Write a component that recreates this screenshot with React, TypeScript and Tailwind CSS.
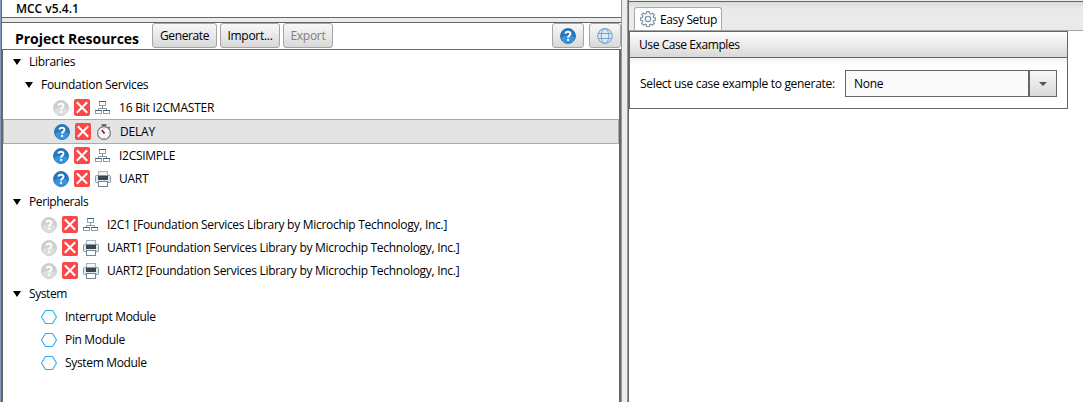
import type { ReactNode } from 'react';

function HelpIcon({ muted = false }: { muted?: boolean }) {
  const rim = muted ? '#c4c4c4' : '#1b66a8';
  const top = muted ? '#cfcfcf' : '#2378c0';
  const low = muted ? '#dedede' : '#3a95dd';
  return (
    <svg width="16" height="16" viewBox="0 0 16 16" className="shrink-0">
      <circle cx="8" cy="8" r="7.5" fill={top} stroke={rim} strokeWidth="0.8" />
      <path d="M1 9.5Q8 5.5 15 9.5A7.2 7.2 0 0 1 1 9.5Z" fill={low} />
      <path d="M5.4 5.7Q5.6 3.7 8 3.7T10.5 5.7Q10.5 6.8 9.2 7.6Q8.1 8.3 8.1 9.7" fill="none" stroke="#fff" strokeWidth="1.9" />
      <circle cx="8.1" cy="12" r="1.15" fill="#fff" />
    </svg>
  );
}

function RemoveIcon() {
  return (
    <svg width="16" height="17" viewBox="0 0 16 17" className="shrink-0">
      <rect width="16" height="17" rx="2" fill="#fb4747" />
      <path d="M2.8 3.2L13.2 13.8M13.2 3.2L2.8 13.8" stroke="#fff" strokeWidth="2" />
    </svg>
  );
}

function NetworkIcon() {
  return (
    <svg width="16" height="16" viewBox="0 0 16 16" className="shrink-0">
      <path d="M7.5 6V8.5M3.5 10V8.5H11.5V10" fill="none" stroke="#8c979f" />
      <g fill="#fff" stroke="#8fa3b1">
        <rect x="4.5" y="1.5" width="6" height="4" />
        <rect x="0.5" y="10.5" width="6" height="3" />
        <rect x="8.5" y="10.5" width="6" height="3" />
      </g>
      <path d="M4 1.5H11M0 10.5H7M8 10.5H15" stroke="#43667f" />
    </svg>
  );
}

function TimerIcon() {
  return (
    <svg width="16" height="16" viewBox="0 0 16 16" className="shrink-0">
      <path d="M5.5 .9H10.5M8 .8V3M12.4 3L13.8 4.2" stroke="#555" strokeWidth="1.5" />
      <circle cx="8" cy="9" r="6.4" fill="#fafafa" stroke="#707070" strokeWidth="1.1" />
      <path d="M8 4V5M8 13V14M3 9H4M12 9H13" stroke="#bbb" />
      <path d="M5.8 6L8.6 9.6" stroke="#a82436" strokeWidth="1.8" />
    </svg>
  );
}

function PrinterIcon() {
  return (
    <svg width="16" height="16" viewBox="0 0 16 16" className="shrink-0">
      <rect x="3.5" y=".5" width="9" height="4" fill="#f4f6f8" stroke="#a5b4c0" />
      <rect x=".5" y="4.5" width="15" height="7" rx="1" fill="#e3e7eb" stroke="#8796a3" />
      <rect x="3" y="5" width="10" height="4" fill="#3b4653" />
      <rect x="3.5" y="10.5" width="9" height="5" fill="#fff" stroke="#6f8698" />
    </svg>
  );
}

function HexIcon() {
  return (
    <svg width="16" height="16" viewBox="0 0 16 16" className="shrink-0">
      <path d="M4.5 1.5H11.5L15.5 8L11.5 14.5H4.5L.5 8Z" fill="none" stroke="#2bb0f0" strokeWidth="1.1" />
    </svg>
  );
}

function GlobeIcon() {
  return (
    <svg width="16" height="16" viewBox="0 0 16 16">
      <circle cx="8" cy="8" r="7.3" fill="#dcebf9" stroke="#8eaac8" strokeWidth="1.2" />
      <g fill="none" stroke="#7ba3d0">
        <ellipse cx="8" cy="8" rx="3.8" ry="7.2" />
        <path d="M1.5 5.5H14.5M1.5 10.5H14.5" />
      </g>
    </svg>
  );
}

function GearIcon() {
  return (
    <svg width="16" height="16" viewBox="0 0 16 16" className="shrink-0">
      <g fill="none" stroke="#8497a6">
        <path strokeWidth="1.2" d="M6.6 .6H9.4L9.7 2.6L11.1 3.2L12.7 2L14.4 3.7L13.2 5.3L13.7 6.6L15.5 6.8V9.3L13.7 9.6L13.2 10.9L14.3 12.5L12.5 14.3L10.9 13.2L9.6 13.7L9.3 15.5H6.7L6.4 13.7L5.1 13.2L3.5 14.3L1.7 12.5L2.8 10.9L2.3 9.6L.5 9.3V6.8L2.3 6.6L2.8 5.2L1.6 3.6L3.3 2L4.9 3.1L6.3 2.6Z" />
        <circle cx="8" cy="8" r="2.7" strokeWidth="1.3" />
      </g>
    </svg>
  );
}

function Branch({ label, className }: { label: string; className: string }) {
  return (
    <div className={`flex h-[23px] items-center ${className}`}>
      <svg width="8" height="6" viewBox="0 0 8 6" className="mr-2 shrink-0">
        <path d="M0 0H8L4 6Z" fill="#000" />
      </svg>
      <span>{label}</span>
    </div>
  );
}

function Leaf({ label, icon, muted, className }: { label: string; icon: ReactNode; muted?: boolean; className: string }) {
  return (
    <div className={`flex items-center gap-[5px] ${className}`}>
      <HelpIcon muted={muted} />
      <RemoveIcon />
      {icon}
      <span className="ml-[3px]">{label}</span>
    </div>
  );
}

function Module({ label }: { label: string }) {
  return (
    <div className="flex h-[23px] items-center gap-2 pl-[38px] tracking-[-0.34px]">
      <HexIcon />
      <span>{label}</span>
    </div>
  );
}

function Button({ children, className }: { children: ReactNode; className: string }) {
  return (
    <button className={`flex h-[25px] items-center justify-center rounded-[3px] border border-[#a5a5a5] bg-linear-to-b from-[#f8f8f8] to-[#d9d9d9] ${className}`}>
      {children}
    </button>
  );
}

export default function App() {
  return (
    <div className="flex h-[402px] w-[1083px] overflow-hidden whitespace-nowrap bg-white font-['Open_Sans',sans-serif] text-[12px] leading-4 tracking-[-0.28px] text-black">
      <div className="w-[2px] border-r border-[#666] bg-[#7f9db9]" />
      <div className="flex w-[620px] flex-col border-r border-[#7f9db9]">
        <header className="flex h-[18px] items-center border-b border-[#666] pl-[14px] font-semibold tracking-[-0.02px]">MCC v5.4.1</header>
        <div className="h-[5px] shrink-0 border-b border-[#666] bg-[#ebebeb]" />
        <div className="flex h-[27px] shrink-0 items-start border-b border-[#666] pl-[13px]">
          <h1 className="w-[137px] pt-[8px] text-[14px] font-bold leading-4 tracking-[-0.02px]">Project Resources</h1>
          <Button className="w-[65px] tracking-[-0.4px]">Generate</Button>
          <Button className="ml-[3px] w-[60px]">Import...</Button>
          <Button className="ml-[3px] w-[50px] text-[#808080]">Export</Button>
          <Button className="ml-auto w-8"><HelpIcon /></Button>
          <Button className="ml-[5px] w-8"><GlobeIcon /></Button>
        </div>
        <main className="flex-1 border-l border-r-2 border-[#666]">
          <Branch label="Libraries" className="pl-[10px]" />
          <Branch label="Foundation Services" className="pl-[22px]" />
          <Leaf label="16 Bit I2CMASTER" icon={<NetworkIcon />} muted className="h-[23px] pl-[50px] tracking-[-0.2px]" />
          <Leaf label="DELAY" icon={<TimerIcon />} className="h-[25px] border border-[#aaa] bg-[#e4e4e4] pl-[50px] tracking-[-0.2px]" />
          <Leaf label="I2CSIMPLE" icon={<NetworkIcon />} className="h-[23px] pl-[50px]" />
          <Leaf label="UART" icon={<PrinterIcon />} className="h-[23px] pl-[50px]" />
          <Branch label="Peripherals" className="pl-[10px] tracking-[-0.4px]" />
          <Leaf label="I2C1 [Foundation Services Library by Microchip Technology, Inc.]" icon={<NetworkIcon />} muted className="h-[23px] pl-[38px]" />
          <Leaf label="UART1 [Foundation Services Library by Microchip Technology, Inc.]" icon={<PrinterIcon />} muted className="h-[23px] pl-[38px]" />
          <Leaf label="UART2 [Foundation Services Library by Microchip Technology, Inc.]" icon={<PrinterIcon />} muted className="h-[23px] pl-[38px]" />
          <Branch label="System" className="pl-[10px] tracking-[-0.4px]" />
          <Module label="Interrupt Module" />
          <Module label="Pin Module" />
          <Module label="System Module" />
        </main>
      </div>
      <div className="w-[6px] border-r border-[#7f9db9] bg-[#ececec]" />
      <div className="flex flex-1 flex-col border-l border-[#666]">
        <div className="h-px bg-[#ececec]" />
        <div className="flex h-[30px] items-end border-b border-t border-b-[#a5a5a5] border-t-[#666] bg-linear-to-b from-[#d8dad8] to-[#eaeaea] to-25% pl-[5px]">
          <div className="flex h-[23px] w-[88px] items-center gap-1 rounded-t-[3px] border border-b-0 border-[#aaa] bg-white pl-[5px]">
            <GearIcon />
            <span className="pt-px tracking-[-0.36px]">Easy Setup</span>
          </div>
        </div>
        <section className="h-[78px] w-[439px] border border-[#666]">
          <h2 className="h-[26px] border-b border-[#666] bg-linear-to-b from-white to-[#d8d8d8] pl-[9px] pt-[5px] tracking-[-0.42px]">Use Case Examples</h2>
          <div className="flex h-[50px] bg-linear-to-b from-[#f4f4f4] to-white to-15% pl-[10px] pt-3">
            <label className="w-[205px] pt-[6px] tracking-[-0.31px]">Select use case example to generate:</label>
            <div className="flex h-[27px] w-[212px] border border-[#666]">
              <div className="flex-1 bg-[#fafafa] pl-2 pt-[5px]">None</div>
              <div className="flex w-[28px] items-center justify-center border-l-2 border-[#666] bg-linear-to-b from-[#f8f8f8] to-[#d9d9d9]">
                <svg width="8" height="4" viewBox="0 0 8 4"><path d="M0 0H8L4 4Z" fill="#555" /></svg>
              </div>
            </div>
          </div>
        </section>
      </div>
    </div>
  );
}
